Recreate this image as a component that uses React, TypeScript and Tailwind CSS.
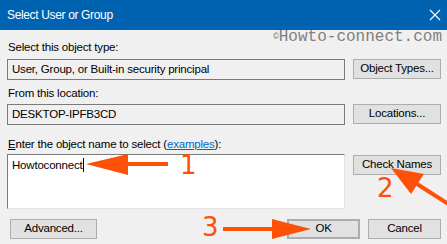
import React from "react";

const ui = "font-['Liberation_Sans','Arial',sans-serif] tracking-[-0.2px]";

function Btn({ children, className = "" }: { children: React.ReactNode; className?: string }) {
  return (
    <div
      className={`h-[20px] flex items-center justify-center bg-[#e1e1e1] border border-[#adadad] text-[11.5px] text-black leading-none ${className}`}
    >
      {children}
    </div>
  );
}

export default function App() {
  return (
    <div className={`relative w-[447px] h-[244px] overflow-hidden bg-[#f0f0f0] ${ui}`}>
      {/* Title bar */}
      <div className="h-[30px] bg-[#0063b1] flex items-center justify-between pl-[7px] pr-[4px]">
        <span className="text-white text-[12px] leading-none tracking-[-0.35px]">Select User or Group</span>
        <svg width="12" height="12" viewBox="0 0 12 12" className="mr-[2px]">
          <path d="M1 1 L11 11 M11 1 L1 11" stroke="white" strokeWidth="1.1" fill="none" />
        </svg>
      </div>

      {/* Watermark */}
      <div className="h-[12px] flex justify-end pr-[5px] text-[#7f7f7f] font-['Liberation_Mono','Courier_New',monospace] leading-none tracking-normal">
        <span className="text-[16px] leading-[12px] mt-[1px] whitespace-nowrap">
          <sup className="text-[9px] relative -top-[2px]">©</sup>Howto-connect.com
        </span>
      </div>

      <div className="pl-[7px] pr-[6px] text-[11.5px]">
        <div className="leading-[15px] text-black h-[15px] -mt-[2px] pl-[1px]">Select this object type:</div>
        <div className="flex gap-[8px] mt-[4px] items-start">
          <div className="w-[338px] h-[21px] border border-[#7a7a7a] bg-[#f0f0f0] flex items-center pl-[4px] text-black">
            User, Group, or Built-in security principal
          </div>
          <Btn className="w-[88px]">Object Types...</Btn>
        </div>

        <div className="leading-[15px] text-black h-[15px] mt-[6px] pl-[1px]">From this location:</div>
        <div className="flex gap-[8px] mt-[3px] items-start">
          <div className="w-[338px] h-[21px] border border-[#7a7a7a] bg-[#f0f0f0] flex items-center pl-[4px] text-black">
            DESKTOP-IPFB3CD
          </div>
          <Btn className="w-[88px]">Locations...</Btn>
        </div>

        <div className="leading-[15px] text-black h-[15px] mt-[12px] pl-[1px]">
          <span className="underline">E</span>nter the object name to select (
          <span className="text-[#0066cc] underline">examples</span>):
        </div>
        <div className="flex gap-[8px] mt-[2px] items-start">
          <div className="w-[338px] h-[55px] border border-[#e3e3e3] border-t-[#7a7a7a] border-l-[#7a7a7a] bg-white pl-[4px] pt-[3px] text-black leading-[15px] flex items-start">
            <span>Howtoconnect</span>
            <span className="inline-block w-[1px] h-[14px] bg-black ml-[1px]" />
          </div>
          <Btn className="w-[88px] mt-[1px]">Check Names</Btn>
        </div>

        <div className="flex mt-[10px] items-start">
          <Btn className="w-[87px] ml-[3px]">Advanced...</Btn>
          <div className="flex-1" />
          <Btn className="w-[73px] border-2 border-[#0078d7]">OK</Btn>
          <Btn className="w-[73px] ml-[8px]">Cancel</Btn>
        </div>
      </div>

      {/* Annotations */}
      <svg className="absolute left-0 top-0 pointer-events-none" width="447" height="244" viewBox="0 0 447 244">
        <g fill="#fd5108" stroke="none">
          {/* Arrow 1 */}
          <rect x="124" y="162" width="44" height="4" />
          <polygon points="86,164 128,154 128,175" />
          {/* Arrow 2 */}
          <line x1="417" y1="184" x2="450" y2="205" stroke="#fd5108" strokeWidth="4" />
          <polygon points="391,168 424,174 411,194" />
          {/* Arrow 3 */}
          <rect x="223" y="227" width="52" height="4" />
          <polygon points="311,229 272,219 272,239" />
        </g>
        <g fill="#fd5108" fontFamily="'DejaVu Sans', sans-serif" fontSize="26" fontWeight="400">
          <text x="180" y="174">1</text>
          <text x="377" y="197">2</text>
          <text x="202" y="236">3</text>
        </g>
      </svg>
    </div>
  );
}
